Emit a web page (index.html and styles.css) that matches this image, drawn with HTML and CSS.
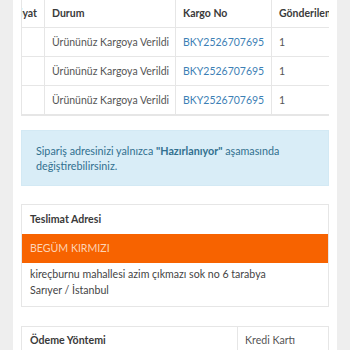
FILE: index.html
```html
<!DOCTYPE html>
<html lang="tr">
<head>
    <meta charset="UTF-8">
    <meta name="viewport" content="width=device-width, initial-scale=1.0">
    <title>Sipariş Detayı</title>
    <link rel="stylesheet" href="styles.css">
</head>
<body>

<div class="page">
  <div class="tableWrapper">
    <table class="orderTable">
      <colgroup>
        <col class="colPrice">
        <col class="colStatus">
        <col class="colCargo">
        <col class="colSent">
      </colgroup>
      <thead>
        <tr>
          <th class="priceCell">Fiyat</th>
          <th>Durum</th>
          <th>Kargo No</th>
          <th>Gönderilen</th>
        </tr>
      </thead>
      <tbody>
        <tr>
          <td class="priceCell"></td>
          <td>Ürününüz Kargoya Verildi</td>
          <td><a href="#">BKY2526707695</a></td>
          <td>1</td>
        </tr>
        <tr>
          <td class="priceCell"></td>
          <td>Ürününüz Kargoya Verildi</td>
          <td><a href="#">BKY2526707695</a></td>
          <td>1</td>
        </tr>
        <tr>
          <td class="priceCell"></td>
          <td>Ürününüz Kargoya Verildi</td>
          <td><a href="#">BKY2526707695</a></td>
          <td>1</td>
        </tr>
      </tbody>
    </table>
  </div>

  <div class="alertInfo">
    Sipariş adresinizi yalnızca <strong>"Hazırlanıyor"</strong> aşamasında değiştirebilirsiniz.
  </div>

  <div class="addressCard">
    <div class="cardHeader">Teslimat Adresi</div>
    <div class="cardName">BEGÜM KIRMIZI</div>
    <div class="cardBody">
      kireçburnu mahallesi azim çıkmazı sok no 6 tarabya<br>
      Sarıyer / İstanbul
    </div>
  </div>

  <div class="paymentCard">
    <div class="paymentLabel">Ödeme Yöntemi</div>
    <div class="paymentValue">Kredi Kartı</div>
  </div>
</div>

</body>
</html>
```

FILE: styles.css
```css
body, html {
  margin: 0;
  padding: 0;
  height: 100%;
  overflow: hidden;
  background-color: #eeeeee;
  font-family: 'Lato', sans-serif;
  font-size: 10.6px;
  color: #555;
}

.page {
  margin: 0 13px;
  min-height: 100%;
  background-color: #fff;
  padding: 0 8px;
  display: flex;
  flex-direction: column;
}

.tableWrapper {
  margin-top: -2px;
  border: 1px solid #e6e6e6;
  border-right: none;
  overflow: hidden;
}

.orderTable {
  margin-left: -21px;
  border-collapse: collapse;
  table-layout: fixed;
  width: 400px;
  font-size: 10.5px;
}

.colPrice { width: 43px; }
.colStatus { width: 131px; }
.colCargo { width: 96px; }
.colSent { width: 130px; }

.orderTable th,
.orderTable td {
  height: 28px;
  padding: 0 7px;
  border: 1px solid #e6e6e6;
  text-align: left;
  white-space: nowrap;
  overflow: hidden;
}

.orderTable .priceCell {
  text-align: right;
}

.orderTable th {
  font-weight: 700;
  color: #3a3a3a;
}

.orderTable thead th {
  border-top: none;
}

.orderTable a {
  color: #3d7fb5;
  text-decoration: none;
}

.alertInfo {
  margin-top: 14px;
  padding: 12px 14px;
  line-height: 15px;
  font-size: 10.75px;
  background-color: #d9edf7;
  border: 1px solid #d3e9f4;
  color: #31708f;
}

.alertInfo strong {
  font-weight: 700;
}

.addressCard {
  margin-top: 18px;
  border: 1px solid #e6e6e6;
}

.cardHeader {
  height: 29px;
  line-height: 29px;
  padding: 0 8px;
  font-weight: 700;
  color: #3a3a3a;
}

.cardName {
  height: 29px;
  line-height: 29px;
  padding: 0 8px;
  background-color: #f76300;
  color: #fdd4b6;
}

.cardBody {
  padding: 3px 8px 8px;
  line-height: 16px;
  color: #444;
}

.paymentCard {
  margin-top: 19px;
  display: flex;
  border: 1px solid #e6e6e6;
}

.paymentLabel {
  width: 199px;
  padding: 6px 8px;
  line-height: 15px;
  font-weight: 700;
  color: #3a3a3a;
  border-right: 1px solid #e6e6e6;
}

.paymentValue {
  padding: 6px 7px;
  line-height: 15px;
}
```
